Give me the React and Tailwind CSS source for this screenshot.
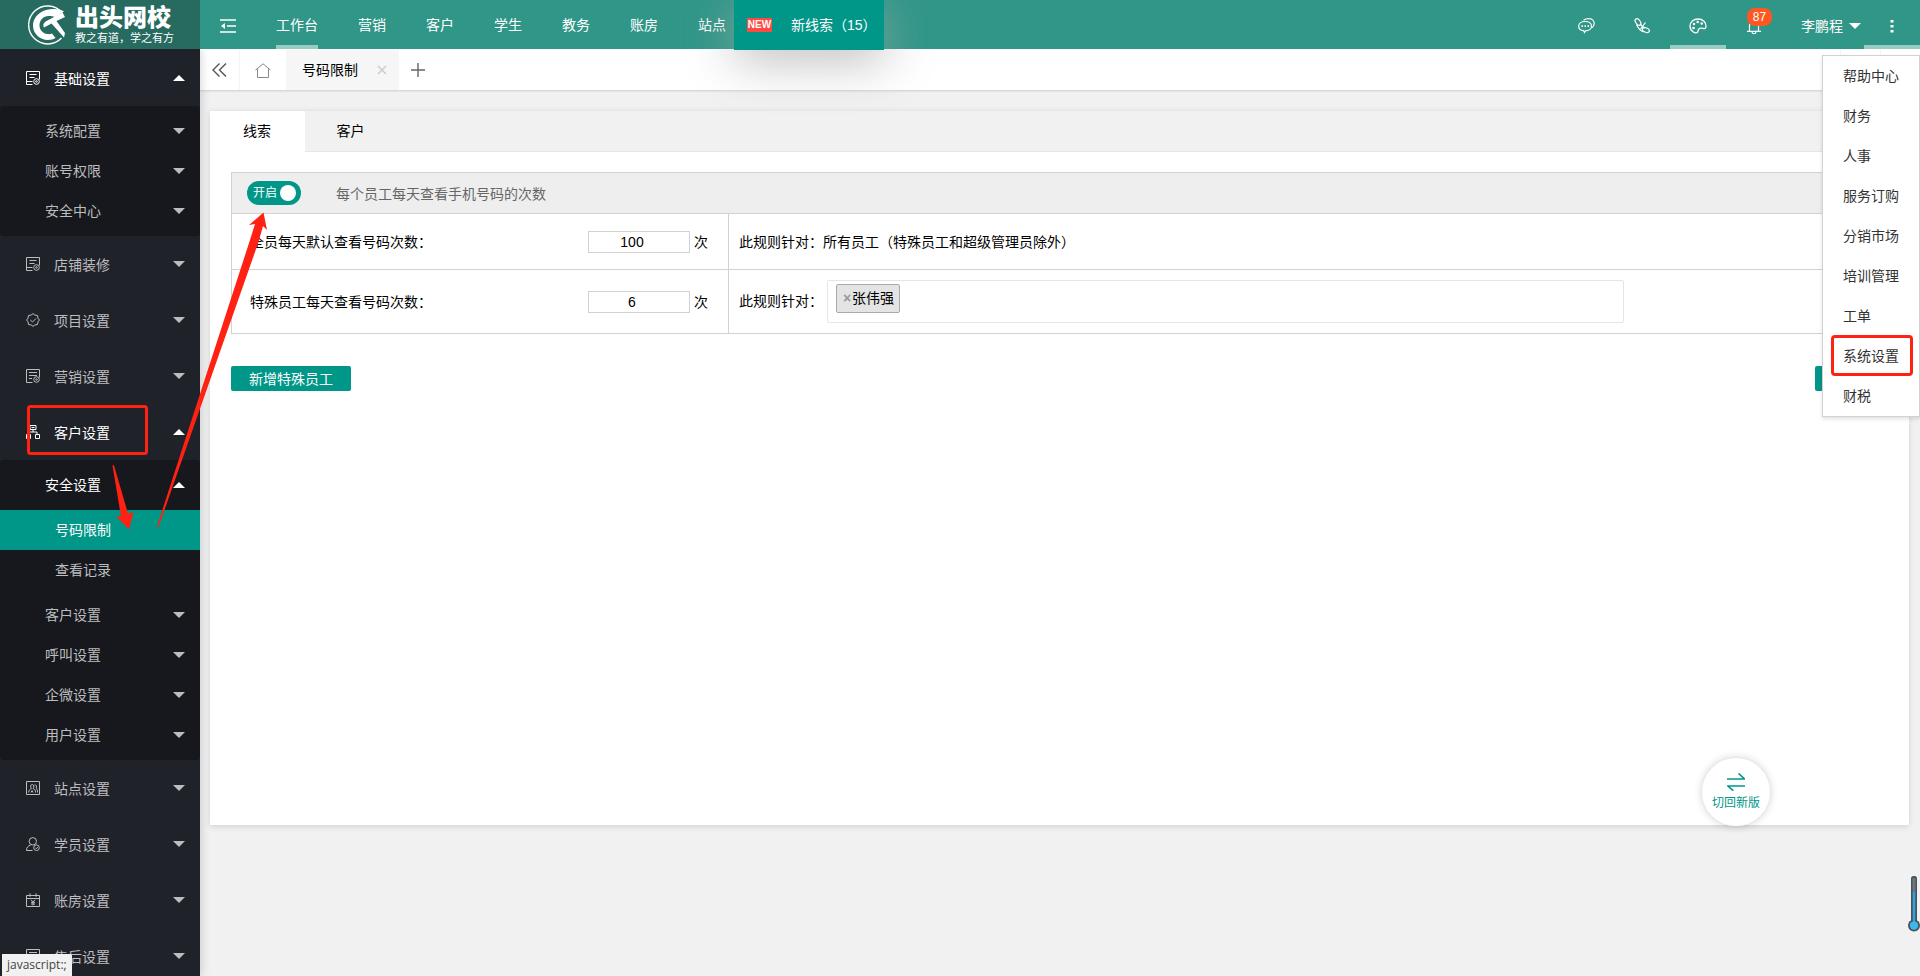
import React from "react";

function Caret({ up, bright }) {
  return (
    <svg width="12" height="6" viewBox="0 0 12 6" aria-hidden="true" className={bright ? "text-white" : "text-[#bcbdbf]"}>
      <path d={up ? "M0 6 6 0l6 6z" : "M0 0h12L6 6z"} fill="currentColor" />
    </svg>
  );
}

const iconPaths = {
  doc: (
    <>
      <path d="M6.500 13.500h-6v-13h13v8M3.500 3.500h7M3.500 6.500h5M.5 10.500h6" />
      <circle cx="10.500" cy="10.500" r="2.800" />
      <circle cx="10.500" cy="10.500" r=".8" />
    </>
  ),
  list: (
    <>
      <path d="M6.500 13.500h-6v-13h13v8M3 3.500h8M3 6.500h8M3 9.500h3" />
      <circle cx="10.500" cy="10.500" r="2.800" />
      <circle cx="10.500" cy="10.500" r=".8" />
    </>
  ),
  badge: (
    <>
      <path d="M7 .6 8.800 2l2.700.5.500 2.700L13.400 7 12 8.800l-.5 2.700-2.700.5L7 13.400 5.200 12l-2.700-.5L2 8.800.6 7 2 5.200l.5-2.700L5.200 2z" />
      <path d="m4.300 7 2.200 2 3.500-3.500" />
    </>
  ),
  org: (
    <path d="M4 .5h6v4H4zM7 4.500V7M3 9V7h8v2M.5 9.500h4v4h-4zM9.500 9.500h4v4h-4zM5.500 2.500h3" />
  ),
  site: (
    <path d="M.5.5h13v13H.5zM2.500 11.500C3 9 4 8 5.500 7.500 4 6 4.500 3.500 6.200 3.500S8.500 6 7 7.500c2 .5 2.500 2 2.500 4M8.500 4c2-.5 2.700 2 1.500 3 1 .8 1.500 2 1.500 4.500M5 11.500l1-2 1 2" />
  ),
  user: (
    <>
      <path d="M6.500 13.500h-6C.5 10.500 2 8.800 4.800 8M6.800.6a3.700 3.700 0 0 1 0 7.400 3.700 3.700 0 0 1 0-7.400z" />
      <circle cx="10.500" cy="10.700" r="2.800" />
      <path d="m9.300 10.700 1 1 1.500-1.600" />
    </>
  ),
  bill: (
    <path d="M.5 2.500h13v11H.5zM.5 5.500h13M4 .3v3.500M10 .3v3.500M5 6.800l2 2.200 2-2.200M7 9v3.500M5 9.300h4M5 11h4" />
  ),
};

function MenuIcon({ name }) {
  return (
    <svg width="14" height="14" viewBox="0 0 14 14" fill="none" stroke="currentColor" strokeWidth="1" aria-hidden="true" className="shrink-0">
      {iconPaths[name]}
    </svg>
  );
}

function Group({ icon, label, open, children }) {
  return (
    <li>
      <a href="#" className={`flex h-14 items-center pr-[15px] pl-[26px] ${open ? "text-white" : "text-[#bcbdbf]"}`}>
        <MenuIcon name={icon} />
        <span className="ml-3.5 flex-1 pt-0.5">{label}</span>
        <Caret up={open} bright={open} />
      </a>
      {children && <ul className="rounded-sm bg-[#17181d] py-[5px]">{children}</ul>}
    </li>
  );
}

function Sub({ label, open, children }) {
  return (
    <li>
      <a href="#" className={`flex h-10 items-center pr-[15px] pl-[45px] ${open ? "text-white" : "text-[#bcbdbf]"}`}>
        <span className="flex-1">{label}</span>
        <Caret up={open} bright={open} />
      </a>
      {children && <ul className="py-[5px]">{children}</ul>}
    </li>
  );
}

function Leaf({ label, active }) {
  return (
    <li>
      <a href="#" className={`flex h-10 items-center pl-[55px] ${active ? "bg-[#009688] text-white" : "text-[#bcbdbf]"}`}>
        {label}
      </a>
    </li>
  );
}

function Logo() {
  return (
    <a href="#" aria-label="出头网校" className="flex h-full w-[200px] shrink-0 items-center bg-[#266a60] pl-7 text-white">
      <svg width="40" height="42" viewBox="0 0 40 42" fill="none" aria-hidden="true">
        <path d="M34 8.500A19 19 0 1 0 33.500 34" stroke="currentColor" strokeWidth="1.400" />
        <path
          d="M36 7.500C31 4.500 24 4.500 18 6 10 8.500 5 14.500 5 21.500c0 8 6.500 14.500 15 14.500 3 0 5.500-.7 7.500-2l-3.500-4.500c-1.500.7-3 .8-4.500.6-4.500-.6-8-4-8-8.600 0-5.500 4-9.500 9-9.500 2.500 0 5 .5 7 1z"
          fill="currentColor"
        />
        <path d="M34.500 8.500 37 13l-8.500 4 8.500 12-1 4.500L23.500 19.500 16 23.500c-1.500-2.500 0-5 2-6.200z" fill="currentColor" />
      </svg>
      <span className="ml-[7px] flex flex-col">
        <span className="text-2xl leading-[26px] font-black">出头网校</span>
        <span className="text-[11px] leading-[14px]">教之有道，学之有方</span>
      </span>
    </a>
  );
}

const nav = ["工作台", "营销", "客户", "学生", "教务", "账房", "站点"];

function Header() {
  return (
    <header className="relative z-20 flex h-[49px] shrink-0 bg-[#2f9688] text-white">
      <Logo />
      <button type="button" aria-label="收起菜单" className="flex w-14 items-center justify-center pt-0.5">
        <svg width="16" height="14" viewBox="0 0 16 14" fill="none" stroke="currentColor" strokeWidth="1.500" aria-hidden="true">
          <path d="M0 1h16M7 7h9M0 13h16" />
          <path d="M5 4v6L1 7z" fill="currentColor" stroke="none" />
        </svg>
      </button>
      <nav className="flex gap-10 pl-5">
        {nav.map((n, i) => (
          <a key={n} href="#" className={`flex h-full items-center border-b-4 pt-1 ${i === 0 ? "border-white/50" : "border-transparent"}`}>
            {n}
          </a>
        ))}
      </nav>
      <a href="#" className="ml-2 flex h-[50px] w-[150px] items-center bg-[#009688] pl-[13px] shadow-[1px_10px_50px_rgba(170,170,170,0.8)]">
        <span className="flex h-3.5 w-[25px] items-center justify-center bg-[#ff4a43] text-[10px] leading-none font-black">NEW</span>
        <span className="ml-[19px] whitespace-nowrap">新线索（15）</span>
      </a>
      <div className="ml-auto flex">
        <button type="button" aria-label="消息" className="flex w-14 items-center justify-center pt-0.5">
          <svg width="17" height="16" viewBox="0 0 17 16" fill="none" stroke="currentColor" strokeWidth="1.200" aria-hidden="true">
            <path d="M7.200 3.500c3.700 0 6.300 2 6.300 4.700s-2.600 4.700-6.300 4.700l-.7 1.600-1-1.800C2.500 12.300.7 10.700.7 8.200c0-2.700 2.700-4.700 6.500-4.700z" />
            <path d="M5.500 2.300C7 1.200 9 .7 10.500.7c3.300 0 5.700 2 5.700 4.700 0 1.900-.9 3.400-2.700 4.600" />
            <path d="M3.500 8.200H5M6.500 8.200H8M9.500 8.200H11" strokeWidth="1.800" />
          </svg>
        </button>
        <button type="button" aria-label="电话" className="flex w-14 items-center justify-center pt-0.5">
          <svg width="16" height="16" viewBox="0 0 16 16" fill="none" stroke="currentColor" strokeWidth="1.200" aria-hidden="true">
            <ellipse cx="4" cy="4" rx="3.800" ry="2.200" transform="rotate(55 4 4)" />
            <ellipse cx="11.800" cy="12" rx="3.800" ry="2.200" transform="rotate(25 11.800 12)" />
            <path d="M2.500 6.500C4 10 6.500 12.800 9.500 14M6 6l4.500 4.500M11.500 4.500 6.500 11" />
          </svg>
        </button>
        <button type="button" aria-label="主题" className="flex w-14 items-center justify-center border-b-4 border-white/50 pt-1.5">
          <svg width="18" height="16" viewBox="0 0 18 16" fill="none" stroke="currentColor" strokeWidth="1.300" aria-hidden="true">
            <path d="M9 1c4.600 0 8 2.800 8 7.300 0 1.700-1 2.500-2.700 2.200-1.600-.3-3.300-.7-4.300.3-1.300 1.200-.5 2.400-1.500 3.500C6.500 15.700 1 13.500 1 8c0-4 3.500-7 8-7z" />
            <g fill="currentColor" stroke="none">
              <circle cx="4.500" cy="10" r="1.300" />
              <circle cx="5" cy="6" r="1.300" />
              <circle cx="8.700" cy="4" r="1.300" />
              <circle cx="12.700" cy="5.500" r="1.300" />
            </g>
          </svg>
        </button>
        <button type="button" aria-label="通知" className="relative flex w-14 items-center justify-center pt-1">
          <svg width="14" height="16" viewBox="0 0 14 16" fill="none" stroke="currentColor" strokeWidth="1.200" aria-hidden="true">
            <path d="M2.500 12V6.500a4.500 4.500 0 0 1 9 0V12M0 12.400h14M5 13c.3 2.300 3.700 2.300 4 0" />
          </svg>
          <span className="absolute top-2 left-[21px] flex h-[18px] w-[25px] items-center justify-center rounded-lg bg-[#ff5722] text-xs">87</span>
        </button>
        <button type="button" className="flex w-[82px] items-center justify-end gap-1.5 pr-[3px] pt-0.5">
          <span>李鹏程</span>
          <Caret bright />
        </button>
        <button type="button" aria-label="更多" className="flex w-14 items-center justify-center border-b-4 border-white/50 pt-1.5">
          <svg width="4" height="14" viewBox="0 0 4 14" fill="currentColor" aria-hidden="true">
            <path d="M.5 1h3v2.500h-3zM.5 6h3v2.500h-3zM.5 11h3v2.500h-3z" />
          </svg>
        </button>
      </div>
    </header>
  );
}

function Sidebar() {
  return (
    <aside className="relative z-10 w-[200px] shrink-0 overflow-hidden bg-[#20222a] pt-px shadow-[0_0_10px_rgba(0,0,0,0.2)]">
      <ul>
        <Group icon="doc" label="基础设置" open>
          <Sub label="系统配置" />
          <Sub label="账号权限" />
          <Sub label="安全中心" />
        </Group>
        <Group icon="doc" label="店铺装修" />
        <Group icon="badge" label="项目设置" />
        <Group icon="list" label="营销设置" />
        <Group icon="org" label="客户设置" open>
          <Sub label="安全设置" open>
            <Leaf label="号码限制" active />
            <Leaf label="查看记录" />
          </Sub>
          <Sub label="客户设置" />
          <Sub label="呼叫设置" />
          <Sub label="企微设置" />
          <Sub label="用户设置" />
        </Group>
        <Group icon="site" label="站点设置" />
        <Group icon="user" label="学员设置" />
        <Group icon="bill" label="账房设置" />
        <Group icon="list" label="售后设置" />
      </ul>
    </aside>
  );
}

function TabBar() {
  return (
    <div className="flex h-[41px] shrink-0 bg-white pt-px text-black shadow-[0_1px_2px_rgba(0,0,0,0.15)]">
      <button type="button" aria-label="向左" className="flex w-10 items-center justify-center border-r border-[#f4f4f4] text-[#555]">
        <svg width="15" height="14" viewBox="0 0 15 14" fill="none" stroke="currentColor" strokeWidth="1.400" aria-hidden="true">
          <path d="M7.500.5 1 7l6.500 6.500M14 .5 7.500 7l6.500 6.500" />
        </svg>
      </button>
      <a href="#" aria-label="首页" className="flex w-[46px] items-center justify-center text-[#888]">
        <svg width="16" height="15" viewBox="0 0 16 15" fill="none" stroke="currentColor" aria-hidden="true">
          <path d="M.5 7 8 .8 15.500 7M2.500 5.500v9h11v-9" />
        </svg>
      </a>
      <div className="flex w-[113px] items-center justify-between bg-[#f6f6f6] pr-3 pl-4">
        <a href="#">号码限制</a>
        <button type="button" aria-label="关闭" className="text-[#c8c8c8]">
          <svg width="10" height="10" viewBox="0 0 10 10" fill="none" stroke="currentColor" strokeWidth="1.200" aria-hidden="true">
            <path d="m1 1 8 8M9 1 1 9" />
          </svg>
        </button>
      </div>
      <button type="button" aria-label="新增标签" className="flex w-[38px] items-center justify-center text-[#666]">
        <svg width="14" height="14" viewBox="0 0 14 14" fill="none" stroke="currentColor" strokeWidth="1.400" aria-hidden="true">
          <path d="M7 0v14M0 7h14" />
        </svg>
      </button>
      <div className="ml-auto flex">
        <span className="w-10 border-l border-[#f4f4f4]" />
        <span className="w-10 border-l border-[#f4f4f4]" />
      </div>
    </div>
  );
}

function CountCell({ id, label, value }) {
  return (
    <td className="border border-[#d2d2d2] pr-5 pl-[18px]">
      <div className="flex items-center">
        <label htmlFor={id} className="flex-1">{label}</label>
        <input id={id} defaultValue={value} className="h-[22px] w-[102px] border border-[#d2d2d2] pr-3.5 text-center outline-none" />
        <span className="ml-1">次</span>
      </div>
    </td>
  );
}

function Rules() {
  return (
    <table className="w-full table-fixed border-collapse text-black">
      <colgroup>
        <col className="w-[497px]" />
        <col />
      </colgroup>
      <thead>
        <tr className="h-[41px] bg-[#eee]">
          <th colSpan={2} className="border border-[#d2d2d2] pl-[15px] text-left font-normal">
            <div className="flex items-center">
              <label className="relative flex h-6 w-[54px] cursor-pointer items-center justify-between rounded-full bg-[#009688] pr-[5px] pl-1.5 text-xs text-white">
                <input type="checkbox" role="switch" defaultChecked className="absolute opacity-0" />
                开启
                <span className="size-4 rounded-full bg-white" />
              </label>
              <span className="ml-[35px] pt-0.5 text-[#666]">每个员工每天查看手机号码的次数</span>
            </div>
          </th>
        </tr>
      </thead>
      <tbody>
        <tr className="h-14">
          <CountCell id="default-count" label="全员每天默认查看号码次数：" value="100" />
          <td className="border border-[#d2d2d2] pl-2.5">此规则针对：所有员工（特殊员工和超级管理员除外）</td>
        </tr>
        <tr className="h-16">
          <CountCell id="special-count" label="特殊员工每天查看号码次数：" value="6" />
          <td className="border border-[#d2d2d2] pl-2.5">
            <div className="flex items-center">
              <label htmlFor="special-staff" className="pb-0.5">此规则针对：</label>
              <div className="ml-1 flex h-[43px] w-[797px] items-start rounded-xs border border-[#e6e6e6] pt-[3px] pl-2">
                <span className="flex h-[29px] items-center rounded-xs border border-[#aaa] bg-[#e4e4e4] px-[5px] pb-0.5">
                  <button type="button" aria-label="移除 张伟强" className="flex w-2.5 justify-center text-sm font-bold text-[#999]">×</button>
                  张伟强
                </span>
                <input id="special-staff" className="h-[29px] min-w-0 flex-1 bg-transparent outline-none" />
              </div>
            </div>
          </td>
        </tr>
      </tbody>
    </table>
  );
}

function Content() {
  return (
    <main className="mt-5 mr-[11px] mb-[151px] ml-2.5 flex flex-1 flex-col bg-white shadow-[0_2px_6px_rgba(0,0,0,0.12)]">
      <div role="tablist" className="flex h-[42px] border-y border-[#e6e6e6] bg-[#f1f1f1] text-black">
        <button type="button" role="tab" aria-selected="true" className="-mb-px w-[95px] bg-white pr-px pb-0.5">线索</button>
        <button type="button" role="tab" aria-selected="false" className="w-[91px]">客户</button>
      </div>
      <section className="px-5 pt-5 pl-[21px]">
        <Rules />
        <div className="mt-8 flex justify-between text-white">
          <button type="button" className="h-[25px] w-[120px] rounded-xs bg-[#009688]">新增特殊员工</button>
          <button type="button" className="h-[25px] w-[74px] rounded-xs bg-[#009688]">保存</button>
        </div>
      </section>
    </main>
  );
}

const more = ["帮助中心", "财务", "人事", "服务订购", "分销市场", "培训管理", "工单", "系统设置", "财税"];

function MoreMenu() {
  return (
    <ul className="absolute top-[55px] right-0 z-30 border border-[#d2d2d2] bg-white text-[#333] shadow-[0_2px_4px_rgba(0,0,0,0.12)]">
      {more.map((m) => (
        <li key={m} className="relative">
          <a href="#" className="flex h-10 items-center px-5">{m}</a>
          {m === "系统设置" && <span className="pointer-events-none absolute inset-y-0 -top-px right-1.5 left-2 rounded-sm border-3 border-[#ff2112]" />}
        </li>
      ))}
    </ul>
  );
}

function Annotations() {
  return (
    <svg width="290" height="540" viewBox="0 0 290 540" aria-hidden="true" className="pointer-events-none absolute top-0 left-0 z-30">
      <rect x="28.500" y="406.500" width="118" height="47" rx="2" fill="none" stroke="#ff2112" strokeWidth="3" />
      <path d="M112.500 465.500q1-1 1.500 0L128 513.500l5.500-1.500L129 529.500 116 516l5 .5z" fill="#ff2112" />
      <path d="M157 526.500 250 240l5-16-6 1 14.500-12.500L267 230l-4-4-4.500 16L158.500 527z" fill="#ff2112" />
    </svg>
  );
}

function SwitchBack() {
  return (
    <button type="button" className="absolute right-[150px] bottom-[150px] z-20 flex size-[68px] flex-col items-center justify-center rounded-full bg-white text-xs text-[#009688] shadow-[0_0_8px_rgba(0,0,0,0.2)]">
      <svg width="18" height="18" viewBox="0 0 18 18" fill="none" stroke="currentColor" strokeWidth="1.600" aria-hidden="true">
        <path d="M0 6h17.500L11.500.5M18 13H.8l5.500 4.700" />
      </svg>
      <span className="mt-1">切回新版</span>
    </button>
  );
}

function Thermometer() {
  return (
    <svg width="12" height="56" viewBox="0 0 12 56" aria-hidden="true" className="absolute right-0 bottom-11 z-20">
      <rect x="3" y="0" width="6" height="50" rx="2.500" fill="#46525e" />
      <rect x="4.500" y="2" width="3" height="44" fill="#6b7680" />
      <circle cx="6" cy="49.500" r="6" fill="#46525e" />
      <path d="M5 16h2v30H5z" fill="#1fa9e8" />
      <circle cx="6" cy="49.500" r="4.200" fill="#3bb9e8" />
    </svg>
  );
}

export default function App() {
  return (
    <div className="relative flex h-screen flex-col overflow-hidden bg-[#f1f1f1] font-['Liberation_Sans','Noto_Sans_CJK_SC',sans-serif] text-sm">
      <Header />
      <div className="flex min-h-0 flex-1">
        <Sidebar />
        <div className="flex min-w-0 flex-1 flex-col">
          <TabBar />
          <Content />
        </div>
      </div>
      <MoreMenu />
      <Annotations />
      <SwitchBack />
      <Thermometer />
      <div className="absolute bottom-0 left-0.5 z-30 h-[22px] rounded-tr-xs bg-[#f1f1f1] px-[5px] font-['Open_Sans',sans-serif] text-xs leading-[22px] text-[#444]">javascript:;</div>
    </div>
  );
}
